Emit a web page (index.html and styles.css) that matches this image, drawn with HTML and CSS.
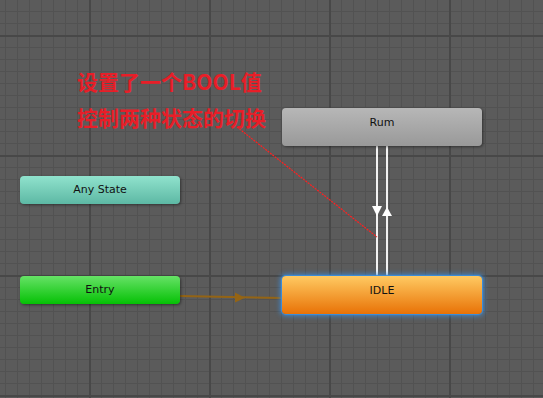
FILE: index.html
```html
<!DOCTYPE html>
<html lang="zh-CN">
<head>
  <meta charset="UTF-8">
  <title>Animator</title>
  <link rel="stylesheet" href="styles.css">
</head>
<body>
  <div class="graph">
    <svg class="edges" width="543" height="398" viewBox="0 0 543 398">
      <!-- Rum <-> IDLE transitions -->
      <line x1="377" y1="146" x2="377" y2="276" class="trans" />
      <line x1="387" y1="146" x2="387" y2="276" class="trans" />
      <polygon points="372,206 382,206 377,216" fill="#fff" />
      <polygon points="387,207 382,216 392,216" fill="#fff" />

      <!-- Entry -> IDLE -->
      <line x1="180" y1="296" x2="282" y2="298" class="entry-link" />
      <polygon points="235,292.5 235,302.5 245,297.7" fill="#946414" />

      <!-- annotation pointer -->
      <line x1="237" y1="127" x2="377" y2="237" class="pointer" />
    </svg>

    <div class="note note-1">设置了一个BOOL值</div>
    <div class="note note-2">控制两种状态的切换</div>

    <div class="state state-rum">Rum</div>
    <div class="state state-any">Any State</div>
    <div class="state state-entry">Entry</div>
    <div class="state state-idle">IDLE</div>
  </div>
</body>
</html>
```

FILE: styles.css
```css
html, body {
  margin: 0;
  padding: 0;
}

body {
  width: 543px;
  height: 398px;
  overflow: hidden;
  font-family: "DejaVu Sans", Verdana, sans-serif;
}

.graph {
  position: relative;
  width: 543px;
  height: 398px;
  background-color: #5b5b5b;
  background-image:
    linear-gradient(90deg, #484848 2px, transparent 2px),
    linear-gradient(180deg, #484848 2px, transparent 2px),
    linear-gradient(90deg, #525252 1px, transparent 1px),
    linear-gradient(180deg, #525252 1px, transparent 1px);
  background-size: 120px 120px, 120px 120px, 12px 12px, 12px 12px;
  background-position: 89px 0, 0 35px, 5px 0, 0 11px;
}

.edges {
  position: absolute;
  left: 0;
  top: 0;
}

.trans {
  stroke: #f2f2f2;
  stroke-width: 2;
}

.entry-link {
  stroke: #946414;
  stroke-width: 2;
}

.pointer {
  stroke: #ff2020;
  stroke-width: 1.2;
  stroke-dasharray: 2 1;
}

.note {
  position: absolute;
  left: 77px;
  font-family: "Noto Sans CJK SC", sans-serif;
  font-weight: bold;
  font-size: 21px;
  line-height: 24px;
  color: #e81e28;
  white-space: nowrap;
}

.note-1 {
  top: 69px;
}

.note-2 {
  top: 105px;
}

.state {
  position: absolute;
  box-sizing: border-box;
  border-radius: 4px;
  text-align: center;
  font-size: 11px;
  line-height: 28px;
  padding-top: 1px;
  color: #111;
  box-shadow: 1px 1px 3px rgba(0, 0, 0, 0.45);
}

.state-rum {
  left: 282px;
  top: 108px;
  width: 200px;
  height: 38px;
  background: linear-gradient(#b7b7b7, #999);
}

.state-any {
  left: 20px;
  top: 176px;
  width: 160px;
  height: 28px;
  padding-top: 0;
  background: linear-gradient(#90e2cd, #5db8a4);
}

.state-entry {
  left: 20px;
  top: 276px;
  width: 160px;
  height: 28px;
  padding-top: 0;
  background: linear-gradient(#66e266, #05c105);
}

.state-idle {
  left: 282px;
  top: 276px;
  width: 200px;
  height: 38px;
  background: linear-gradient(#ffca62, #e87206);
  box-shadow: 0 0 1px 1px #3b8ede, 0 0 5px 2px rgba(59, 142, 222, 0.8);
}
```
